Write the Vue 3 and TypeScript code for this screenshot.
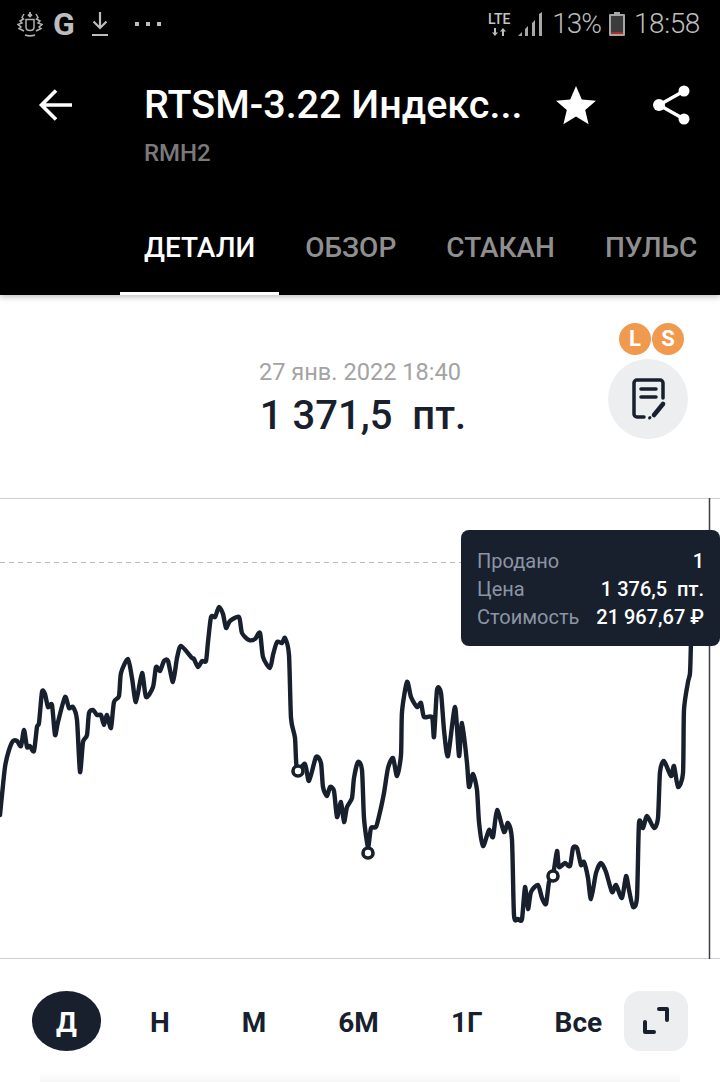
<script setup lang="ts">
const tabs = ['ДЕТАЛИ', 'ОБЗОР', 'СТАКАН', 'ПУЛЬС']
const periods = ['Д', 'Н', 'М', '6М', '1Г', 'Все']

const tooltipRows = [
  { label: 'Продано', value: '1' },
  { label: 'Цена', value: '1 376,5\u00a0\u00a0пт.' },
  { label: 'Стоимость', value: '21 967,67\u00a0\u20bd' },
]

// traced from the chart, page coordinates
const line: [number, number][] = [
  [0, 815], [2, 795], [5, 767], [9, 750], [13, 741], [17, 741], [21, 746], [24, 730], [27, 747], [30, 746],
  [34, 751], [37, 727], [39, 723], [42, 692], [45, 694], [48, 707], [52, 705], [55, 735], [58, 722], [65, 697],
  [69, 708], [73, 707], [77, 720], [80, 772], [83, 742], [87, 735], [89, 713], [93, 710], [97, 715], [101, 715],
  [104, 725], [107, 715], [111, 728], [114, 702], [119, 696], [121, 673], [128, 659], [132, 678], [136, 702],
  [142, 673], [146, 697], [153, 687], [156, 667], [160, 671], [164, 661], [168, 661], [173, 682], [177, 658],
  [181, 646], [192, 658], [194, 659], [198, 667], [202, 661], [206, 661], [208, 642], [211, 617], [215, 617],
  [219, 607], [223, 614], [226, 628], [230, 621], [239, 617], [242, 633], [249, 640], [255, 639], [260, 633],
  [263, 657], [270, 668], [273, 655], [277, 642], [282, 643], [285, 638], [289, 655], [291, 718], [295, 738],
  [297, 770], [305, 764], [309, 781], [316, 757], [321, 763], [323, 787], [327, 796], [330, 787], [334, 791],
  [337, 817], [341, 802], [344, 822], [347, 807], [352, 798], [354, 778], [358, 762], [362, 770], [364, 818],
  [368, 847], [371, 828], [376, 827], [380, 812], [384, 793], [388, 768], [393, 758], [397, 776], [401, 755],
  [402, 712], [407, 682], [411, 697], [417, 707], [421, 703], [424, 717], [432, 717], [434, 737], [437, 690],
  [441, 693], [444, 730], [448, 756], [455, 707], [459, 756], [462, 723], [467, 763], [469, 787], [473, 774],
  [477, 790], [479, 822], [483, 846], [489, 830], [493, 837], [497, 810], [504, 832], [508, 823], [512, 840],
  [514, 915], [518, 919], [522, 919], [525, 887], [528, 909], [531, 892], [538, 885], [542, 898], [546, 904],
  [549, 882], [553, 875], [557, 851], [559, 867], [565, 863], [570, 866], [573, 848], [577, 848], [581, 865],
  [584, 862], [588, 878], [591, 899], [596, 873], [601, 863], [606, 872], [612, 892], [616, 885], [622, 898],
  [626, 876], [629, 890], [633, 907], [637, 897], [639, 823], [643, 828], [647, 816], [654, 828], [658, 818],
  [660, 772], [664, 761], [671, 776], [674, 766], [678, 787], [683, 773], [684, 710], [688, 682], [690, 673],
  [691, 640],
]

// light catmull-rom so the peaks round off a little
function smooth(pts: [number, number][], k = 0.12) {
  let d = `M${pts[0][0]} ${pts[0][1]}`
  for (let i = 0; i < pts.length - 1; i++) {
    const p0 = pts[i - 1] ?? pts[i]
    const p1 = pts[i]
    const p2 = pts[i + 1]
    const p3 = pts[i + 2] ?? p2
    const c1x = p1[0] + (p2[0] - p0[0]) * k
    const c1y = p1[1] + (p2[1] - p0[1]) * k
    const c2x = p2[0] - (p3[0] - p1[0]) * k
    const c2y = p2[1] - (p3[1] - p1[1]) * k
    d += `C${c1x.toFixed(1)} ${c1y.toFixed(1)} ${c2x.toFixed(1)} ${c2y.toFixed(1)} ${p2[0]} ${p2[1]}`
  }
  return d
}

const linePath = smooth(line)
const markers = [
  [298, 771],
  [368, 853],
  [553, 876],
]
</script>

<template>
  <div class="screen">
    <header class="top">
      <div class="status">
        <div class="status-left">
          <svg class="wreath" width="26" height="26" viewBox="0 0 26 26" fill="none" stroke="#b0b0b0" stroke-width="1.500">
            <path d="M13 1v4M11 3.500l2 2 2-2" stroke-width="1.800" />
            <path d="M9 8.500h8v7.500c0 2.200-1.800 3.500-4 3.500s-4-1.300-4-3.500z" />
            <path d="M7 3L5 6.500 6.500 8 3 10l2 2-4 1.500 3 2.500-2 1.500 5 2.500" />
            <path d="M19 3l2 3.500L19.500 8 23 10l-2 2 4 1.500-3 2.500 2 1.500-5 2.500" />
            <path d="M8 24c3 1 7 1 10 0" stroke-width="1.800" />
          </svg>
          <span class="g-mark">G</span>
          <svg class="dl" width="18" height="26" viewBox="0 0 18 26" fill="none" stroke="#bdbdbd" stroke-width="2.200">
            <path d="M9 1v16M2.500 10.500L9 17l6.500-6.500M1 24h16" />
          </svg>
          <div class="dots"><i /><i /><i /></div>
        </div>
        <div class="status-right">
          <div class="lte">
            <span>LTE</span>
            <svg width="14" height="8" viewBox="0 0 14 8" fill="#bdbdbd">
              <path d="M3 8L0 4.500h2V0h2v4.500h2zM11 0l3 3.500h-2V8h-2V3.500H8z" />
            </svg>
          </div>
          <svg class="signal" width="24" height="24" viewBox="0 0 24 24" fill="#a8a8a8">
            <path d="M0 24l4-4v4zM7 24v-7l3-3v10zM14 24V11l3-3v16zM21 24V2l3-2v24z" />
          </svg>
          <span class="pct">13%</span>
          <svg class="batt" width="16" height="24" viewBox="0 0 16 24">
            <path d="M5 0h6v2h4a1 1 0 0 1 1 1v20a1 1 0 0 1-1 1H1a1 1 0 0 1-1-1V3a1 1 0 0 1 1-1h4z" fill="#a6a6a6" />
            <rect x="2" y="4" width="12" height="18" fill="#3c3c3c" />
            <rect x="2" y="20" width="12" height="2" fill="#b02a2a" />
          </svg>
          <span class="clock">18:58</span>
        </div>
      </div>

      <div class="title-row">
        <svg class="back" width="42" height="42" viewBox="0 0 42 42" fill="none" stroke="#fff" stroke-width="3.600">
          <path d="M36 21H6M20 6.500L5.500 21 20 35.500" />
        </svg>
        <div class="title-col">
          <div class="title">RTSM-3.22 Индекс...</div>
          <div class="ticker">RMH2</div>
        </div>
        <svg class="star" width="44" height="42" viewBox="0 0 44 42" fill="#fff">
          <path d="M22 2l5.800 13.400 14.200 1.300-10.800 9.300 3.400 14.300L22 32.600 9.400 40.300l3.400-14.300L2 16.700l14.200-1.300z" />
        </svg>
        <svg class="share" width="44" height="42" viewBox="0 0 44 42" fill="#fff" stroke="#fff">
          <path d="M34 7L9 21l25 14" fill="none" stroke-width="3.400" />
          <circle cx="34" cy="7" r="5.500" stroke="none" />
          <circle cx="9" cy="21" r="6" stroke="none" />
          <circle cx="34" cy="35" r="5.500" stroke="none" />
        </svg>
      </div>

      <nav class="tabs">
        <div v-for="(t, i) in tabs" :key="t" class="tab" :class="{ active: i === 0 }">{{ t }}</div>
      </nav>
    </header>

    <section class="info">
      <div />
      <div class="quote">
        <div class="date">27 янв. 2022 18:40</div>
        <div class="price">1 371,5&nbsp;&nbsp;пт.</div>
      </div>
      <div class="notes">
        <div class="badges">
          <span class="badge">L</span>
          <span class="badge">S</span>
        </div>
        <div class="notes-btn">
          <svg width="40" height="48" viewBox="0 0 40 48" fill="none" stroke="#18202e" stroke-width="3.500" stroke-linecap="round" stroke-linejoin="round">
            <path d="M35 23V8a3 3 0 0 0-3-3H9a3 3 0 0 0-3 3v31a3 3 0 0 0 3 3h7" />
            <path d="M13 14h15M13 22h15" />
            <path d="M35 29L26 40" stroke-width="4.500" />
            <path d="M21.500 43l.5-.5" stroke-width="3" />
          </svg>
        </div>
      </div>
    </section>

    <section class="chart">
      <svg class="plot" width="720" height="461" viewBox="0 498 720 461">
        <path d="M0 562.500H461" stroke="#bcbcbc" stroke-width="1" stroke-dasharray="5 4" fill="none" />
        <path d="M709.500 498V959" stroke="#3a3f47" stroke-width="1.500" fill="none" />
        <path :d="linePath" fill="none" stroke="#18202e" stroke-width="4.400" stroke-linejoin="round" stroke-linecap="round" />
        <circle v-for="(m, i) in markers" :key="i" :cx="m[0]" :cy="m[1]" r="5" fill="#fff" stroke="#18202e" stroke-width="3.600" />
      </svg>
      <div class="tooltip">
        <template v-for="r in tooltipRows" :key="r.label">
          <span class="tt-label">{{ r.label }}</span>
          <span class="tt-value">{{ r.value }}</span>
        </template>
      </div>
    </section>

    <section class="periods">
      <button v-for="(p, i) in periods" :key="p" class="period" :class="{ active: i === 0 }">{{ p }}</button>
      <button class="expand">
        <svg width="30" height="30" viewBox="0 0 30 30" fill="none" stroke="#18202e" stroke-width="4" stroke-linecap="round" stroke-linejoin="round">
          <path d="M18 3h8v11M4 16v10h9" />
        </svg>
      </button>
    </section>
    <div class="foot" />
  </div>
</template>

<style scoped>
.screen {
  width: 720px;
  height: 1082px;
  overflow: hidden;
  background: #fff;
  font-family: Roboto, "Noto Sans", sans-serif;
  color: #18202e;
}

.top {
  position: relative;
  z-index: 2;
  height: 295px;
  background: #000;
  box-shadow: 0 2px 6px rgba(0, 0, 0, 0.25);
}

.status {
  height: 48px;
  display: flex;
  justify-content: space-between;
  align-items: center;
  padding: 0 20px 0 17px;
  color: #b5b5b5;
}

.status-left,
.status-right {
  display: flex;
  align-items: center;
}

.g-mark {
  margin-left: 10px;
  font-size: 32px;
  font-weight: 700;
  line-height: 48px;
  color: #bdbdbd;
}

.dl {
  margin-left: 16px;
}

.dots {
  display: flex;
  gap: 7px;
  margin-left: 26px;
}

.dots i {
  width: 4px;
  height: 4px;
  background: #bdbdbd;
}

.lte {
  display: flex;
  flex-direction: column;
  align-items: center;
  gap: 2px;
  width: 26px;
  font-size: 14px;
  font-weight: 500;
  line-height: 14px;
  color: #c4c4c4;
}

.signal {
  margin-left: 6px;
}

.pct,
.clock {
  font-size: 28px;
  font-weight: 300;
  line-height: 48px;
  color: #bdbdbd;
}

.clock {
  letter-spacing: -0.4px;
}

.pct {
  margin-left: 10px;
  letter-spacing: -1px;
}

.batt {
  margin: 0 9px 0 8px;
}

.title-row {
  display: flex;
  align-items: flex-start;
  height: 84px;
  margin-top: 36px;
  padding-right: 26px;
}

.back {
  margin-left: 36px;
}

.title-col {
  flex: 1;
  margin-left: 66px;
}

.title {
  font-size: 39.500px;
  font-weight: 500;
  line-height: 42px;
  color: #fff;
  white-space: nowrap;
}

.ticker {
  margin-top: 12px;
  font-size: 24px;
  line-height: 30px;
  font-weight: 500;
  color: #7a7a7a;
}

.share {
  margin-left: 52px;
}

.tabs {
  display: flex;
  gap: 2px;
  margin-top: 36px;
  padding-left: 120px;
}

.tab {
  padding: 27px 24px;
  border-bottom: 3px solid transparent;
  font-size: 28px;
  font-weight: 500;
  line-height: 34px;
  color: #8f8f8f;
  white-space: nowrap;
}

.tab.active {
  color: #fff;
  border-bottom-color: #fff;
}

.info {
  height: 203px;
  display: grid;
  grid-template-columns: 1fr auto 1fr;
  align-items: start;
  box-sizing: border-box;
}

.quote {
  margin-top: 62px;
  text-align: center;
}

.date {
  font-size: 23.600px;
  line-height: 30px;
  color: #a3a3a3;
}

.price {
  margin-top: 6px;
  padding-left: 6px;
  font-size: 40px;
  font-weight: 500;
  line-height: 46px;
  white-space: nowrap;
}

.notes {
  position: relative;
  justify-self: end;
  margin: 64px 32px 0 0;
}

.badges {
  position: absolute;
  top: -36px;
  right: 4px;
  display: flex;
  gap: 1px;
}

.badge {
  width: 32px;
  height: 32px;
  border-radius: 50%;
  background: #f09a50;
  color: #fff;
  font-size: 22px;
  font-weight: 700;
  line-height: 32px;
  text-align: center;
}

.notes-btn {
  width: 80px;
  height: 80px;
  border-radius: 50%;
  background: #eceef0;
  display: flex;
  align-items: center;
  justify-content: center;
}

.chart {
  position: relative;
  height: 459px;
  border-top: 1px solid #cfcfcf;
  border-bottom: 1px solid #cfcfcf;
}

.plot {
  position: absolute;
  top: -1px;
  left: 0;
  display: block;
}

.tooltip {
  position: absolute;
  top: 31px;
  right: 0;
  width: 259px;
  height: 116px;
  box-sizing: border-box;
  padding: 17px 16px;
  border-radius: 8px;
  background: #18202e;
  display: grid;
  grid-template-columns: auto 1fr;
  grid-auto-rows: 28px;
  align-items: center;
  font-size: 20px;
}

.tt-label {
  color: #8c95a3;
}

.tt-value {
  color: #fff;
  font-weight: 500;
  text-align: right;
  white-space: nowrap;
}

.periods {
  height: 113px;
  box-sizing: border-box;
  padding: 32px 0 0 32px;
  display: flex;
  align-items: flex-start;
  gap: 24px;
}

.period {
  height: 60px;
  padding: 2px 24px 0;
  border: 0;
  border-radius: 35px / 30px;
  background: none;
  font-family: inherit;
  font-size: 28px;
  font-weight: 700;
  color: #18202e;
}

.period.active {
  min-width: 69px;
  margin-right: 1px;
  background: #18202e;
  color: #fff;
}

.expand {
  width: 64px;
  height: 60px;
  margin-left: -26px;
  padding: 0;
  border: 0;
  border-radius: 16px;
  background: #eceef0;
  display: flex;
  align-items: center;
  justify-content: center;
}

.foot {
  height: 10px;
  margin: 0 40px;
  background: linear-gradient(#fff, #f6f6f6);
}
</style>
